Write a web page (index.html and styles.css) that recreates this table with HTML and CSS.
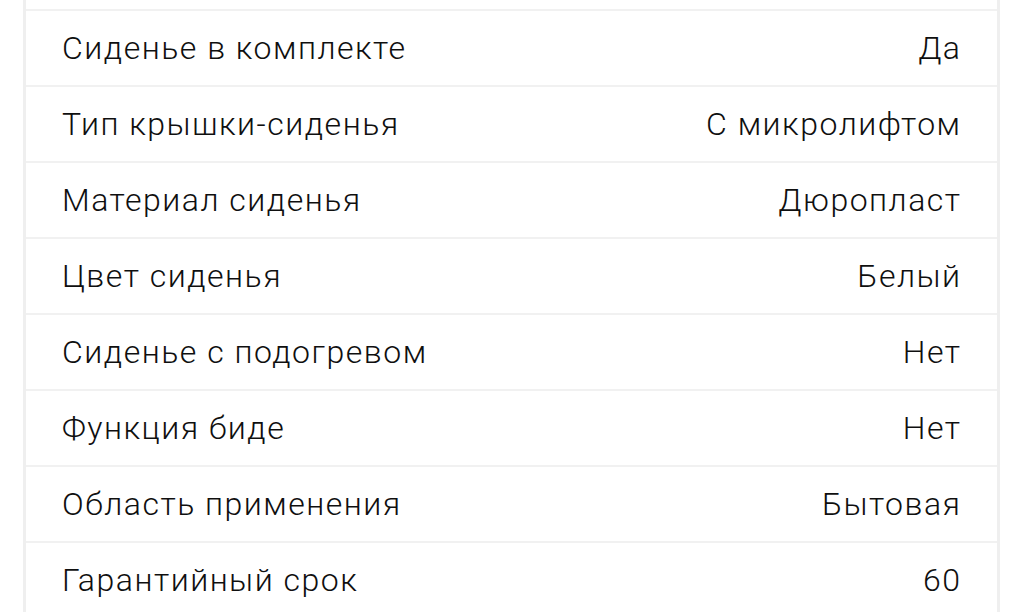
FILE: index.html
```html
<!DOCTYPE html>
<html lang="ru">
<head>
<meta charset="utf-8">
<link rel="stylesheet" href="styles.css">
</head>
<body>
<div class="specs">
  <div class="row row-top"></div>
  <div class="row"><span class="name">Сиденье в комплекте</span><span class="value">Да</span></div>
  <div class="row"><span class="name">Тип крышки-сиденья</span><span class="value">С микролифтом</span></div>
  <div class="row"><span class="name">Материал сиденья</span><span class="value">Дюропласт</span></div>
  <div class="row"><span class="name">Цвет сиденья</span><span class="value">Белый</span></div>
  <div class="row"><span class="name">Сиденье с подогревом</span><span class="value">Нет</span></div>
  <div class="row"><span class="name">Функция биде</span><span class="value">Нет</span></div>
  <div class="row"><span class="name">Область применения</span><span class="value">Бытовая</span></div>
  <div class="row"><span class="name">Гарантийный срок</span><span class="value">60</span></div>
</div>
</body>
</html>
```
FILE: styles.css
```css
html, body {
  margin: 0;
  padding: 0;
  background: #ffffff;
  overflow: hidden;
}
body {
  font-family: Roboto, "Noto Sans", sans-serif;
  color: #0f0f0f;
}
.specs {
  margin-left: 23px;
  width: 977px;
  border-left: 3px solid #efefef;
  border-right: 3px solid #efefef;
  box-sizing: border-box;
}
.row {
  display: flex;
  justify-content: space-between;
  align-items: center;
  height: 76px;
  box-sizing: border-box;
  border-bottom: 2px solid #f1f1f1;
  padding: 0 37px 0 36px;
  font-size: 32px;
  font-weight: 300;
  letter-spacing: 1.5px;
  line-height: 1;
}
.value {
  margin-right: -1.5px;
}
.row-top {
  height: 11px;
}
```
